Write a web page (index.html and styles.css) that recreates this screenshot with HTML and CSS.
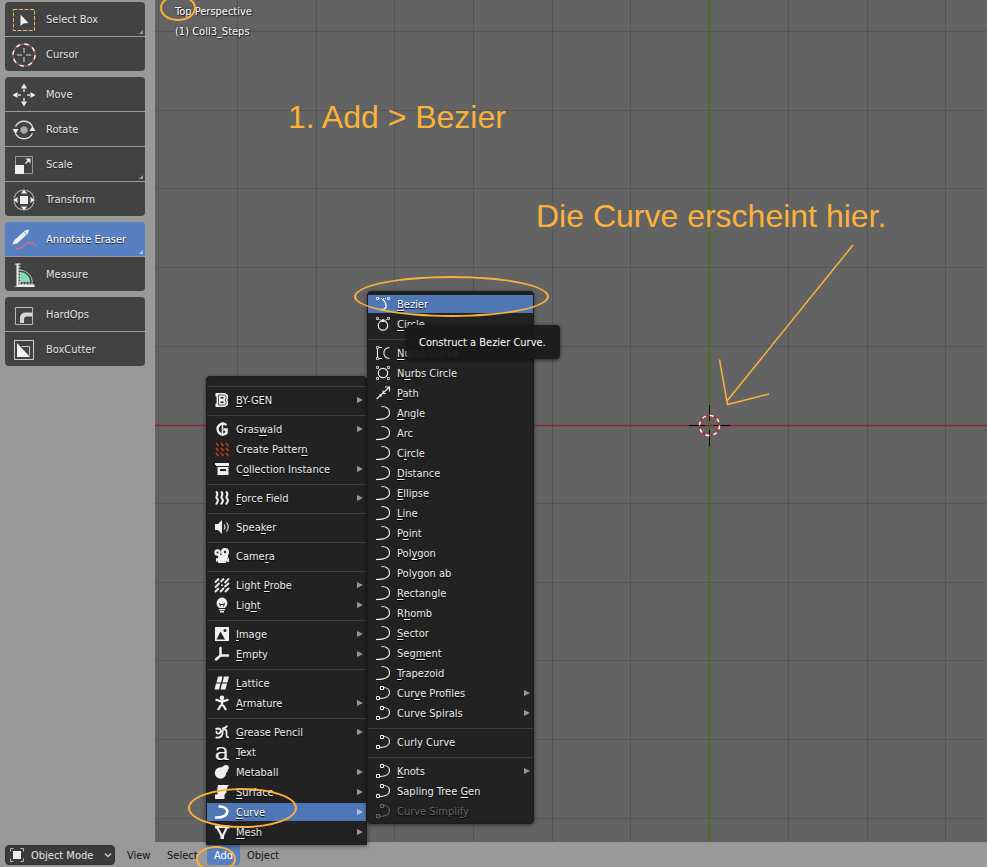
FILE: index.html
```html
<!DOCTYPE html>
<html lang="en">
<head>
<meta charset="utf-8">
<title>3D Viewport</title>
<link rel="stylesheet" href="styles.css">
</head>
<body>
<svg class="defs" aria-hidden="true">
  <defs>
    <symbol id="arc" viewBox="0 0 16 16"><path d="M6.500 1.500C11.500 1.500 14.500 4 14.500 8C14.500 12 10.500 14.500 1 14.500" fill="none" stroke="currentColor" stroke-width="1.200"/></symbol>
    <symbol id="arcpts" viewBox="0 0 16 16"><path d="M8.500 2.500C12 2.500 14.500 4.500 14.500 7.500C14.500 11 11 13.500 5 13.500" fill="none" stroke="currentColor" stroke-width="1.200"/><path d="M5.500 1.500h3v3h-3zM1.500 11.500h3v3h-3z" fill="none" stroke="currentColor"/></symbol>
    <symbol id="more" viewBox="0 0 6 6"><path d="M0 0L6 3L0 6z" fill="currentColor"/></symbol>
    <symbol id="corner" viewBox="0 0 4 4"><path d="M4 0V4H0z" fill="currentColor"/></symbol>
  </defs>
</svg>

<main class="workspace">
  <nav class="toolbar" aria-label="Tools">
    <div class="group">
      <button class="tool" type="button"><svg class="tool-icon" viewBox="0 0 24 24"><rect x="1.500" y="1.500" width="21" height="21" fill="none" stroke="#e3b95c" stroke-dasharray="4 1.500"/><path d="M8.500 6.500V18L11.500 15.500L16.500 15z" fill="#eee"/></svg>Select Box<svg class="corner"><use href="#corner"/></svg></button>
      <button class="tool" type="button"><svg class="tool-icon" viewBox="0 0 24 24"><circle cx="12" cy="12" r="11" fill="none" stroke="#a84e58" stroke-width="1.500"/><circle cx="12" cy="12" r="11" fill="none" stroke="#f2f2f2" stroke-width="1.500" stroke-dasharray="4.320 4.320"/><path d="M12 5v5M12 14v5M5 12h5M14 12h5" stroke="#aaa" stroke-width="1.500"/></svg>Cursor</button>
    </div>
    <div class="group">
      <button class="tool" type="button"><svg class="tool-icon" viewBox="0 0 24 24"><path d="M12 0.500l3 5H9zM12 23.500l3-5H9zM0.500 12l5-3v6zM23.500 12l-5-3v6z" fill="#eee"/><path d="M12 6v3M12 15v3M6 12h3M15 12h3" stroke="#ddd" stroke-width="1.500"/></svg>Move</button>
      <button class="tool" type="button"><svg class="tool-icon" viewBox="0 0 24 24"><path d="M3.500 8.500A9.500 9.500 0 0 1 20.500 8.500M3.500 15.500A9.500 9.500 0 0 0 20.500 15.500" fill="none" stroke="#e6e6e6" stroke-width="1.300"/><path d="M0.500 11h6l-3 5zM17.500 13h6l-3-5z" fill="#eee"/><path d="M10.500 8.500h3l2 2v3l-2 2h-3l-2-2v-3z" fill="#aaa"/></svg>Rotate</button>
      <button class="tool" type="button"><svg class="tool-icon" viewBox="0 0 24 24"><path d="M3.500 12V3.500H20.500V20.500H12" fill="none" stroke="#999"/><path d="M3 12h9v9H3z" fill="#eee"/><path d="M13.500 10.500L17 7" stroke="#eee" stroke-width="1.500"/><path d="M18.500 5.500v5l-5-5z" fill="#eee"/></svg>Scale<svg class="corner"><use href="#corner"/></svg></button>
      <button class="tool" type="button"><svg class="tool-icon" viewBox="0 0 24 24"><circle cx="12" cy="12" r="10" fill="none" stroke="#ccc" stroke-dasharray="11.700 4" stroke-dashoffset="-2"/><path d="M8 8h8v8H8z" fill="#eee"/><path d="M12 1l3 4.500H9zM12 23l3-4.500H9zM1 12l4.500-3v6zM23 12l-4.500-3v6z" fill="#eee"/></svg>Transform</button>
    </div>
    <div class="group">
      <button class="tool active" type="button"><svg class="tool-icon" viewBox="0 0 24 24"><path d="M0.500 16.500L2 12.500L13 2.500L17 1.500L16 5.500L5 15.500z" fill="#f0f0f0"/><path d="M12 3.500l3 3" stroke="#6f92ca"/><path d="M3 20C8 22 11 19 13.500 16.500S20 13 24 18" fill="none" stroke="#dc6b78" stroke-width="1.500"/></svg>Annotate Eraser<svg class="corner"><use href="#corner"/></svg></button>
      <button class="tool" type="button"><svg class="tool-icon" viewBox="0 0 24 24"><path d="M8 9A11 11 0 0 1 18.500 19H8z" fill="#83dcb1"/><path d="M8 7A13 13 0 0 1 20.500 19" fill="none" stroke="#83dcb1"/><path d="M3.500 0.500h5v1h-2v2h2v1h-2v2h2v1h-2v2h2v1h-2v2h2v1h-2v2h2v1h-2v2h2v1h-2v2h1v-2h1v2h2v-2h1v2h2v-2h1v2h2v-2h1v2h2v-2h1v2h2v3h-20v-1h2V1.500h-2z" fill="#eee"/></svg>Measure</button>
    </div>
    <div class="group">
      <button class="tool" type="button"><svg class="tool-icon" viewBox="0 0 24 24"><path d="M3.500 4.500h17v17h-17z" fill="none" stroke="#bbb"/><path d="M8 20V15Q8 9.500 14 9.500H20V13.500H15Q12 13.500 12 16V20z" fill="#d8d8d8"/></svg>HardOps</button>
      <button class="tool" type="button"><svg class="tool-icon" viewBox="0 0 24 24"><path d="M2.500 2.500h19v19h-19z" fill="none" stroke="#ccc"/><path d="M9.500 8.500h8v9" fill="none" stroke="#ccc"/><path d="M5 5V19H18z" fill="#f2f2f2"/></svg>BoxCutter</button>
    </div>
  </nav>

  <section class="viewport" aria-label="3D viewport">
    <svg class="scene" aria-hidden="true">
      <path class="grid" d="M3.500 0V2000M82.500 0V2000M161.500 0V2000M239.500 0V2000M318.500 0V2000M397.500 0V2000M475.500 0V2000M633.500 0V2000M712.500 0V2000M790.500 0V2000M869.500 0V2000M0 31.500H3000M0 110.500H3000M0 188.500H3000M0 267.500H3000M0 346.500H3000M0 503.500H3000M0 582.500H3000M0 660.500H3000M0 739.500H3000M0 818.500H3000"/>
      <path d="M554.500 0V2000" stroke="#48700a" stroke-width="1.500"/>
      <path d="M0 425.500H3000" stroke="#94212f" stroke-width="1.500"/>
      <path d="M554.500 405v16M554.500 430v16M534 425.500h16M559 425.500h16" stroke="#000"/>
      <circle cx="554.500" cy="425.500" r="10" fill="none" stroke="#c8202c" stroke-width="1.500"/>
      <circle cx="554.500" cy="425.500" r="10" fill="none" stroke="#fff" stroke-width="1.500" stroke-dasharray="3.930 3.930"/>
      <path class="ink" d="M698 245L572 401M564.500 359.500L572.500 404.500L614 394"/>
    </svg>
    <div class="info">Top Perspective<br>(1) Coll3_Steps</div>
    <span class="ring ring-top"></span>
    <p class="note note-step">1. Add &gt; Bezier</p>
    <p class="note note-here">Die Curve erscheint hier.</p>
  </section>
</main>

<footer class="header">
  <label class="mode">
    <svg class="mode-icon" viewBox="0 0 14 14"><path d="M3 3h8v8H3z" fill="#eee"/><path d="M.5 3.500v-3h3M10.500.5h3v3M13.500 10.500v3h-3M3.500 13.500h-3v-3" fill="none" stroke="#bbb"/></svg>
    <select aria-label="Mode"><option>Object Mode</option></select>
    <svg class="chevron" viewBox="0 0 8 5"><path d="M1 .5L4 3.500L7 .5" fill="none" stroke="#ccc" stroke-width="1.300"/></svg>
  </label>
  <button class="menu-button" type="button">View</button>
  <button class="menu-button" type="button">Select</button>
  <div class="anchor">
    <button class="menu-button open" type="button" aria-haspopup="true" aria-expanded="true">Add</button>
    <span class="ring ring-add"></span>
    <ul class="menu main-menu">
      <li class="sep"></li>
      <li><button type="button"><svg class="icon" viewBox="0 0 16 16"><path d="M1.500 1h9.500l3 2v4l-1 1l1 1v4l-3 2H1.500v-3.500h1v-7h-1z" fill="#eee"/><path d="M4.500 3h6l1.500 1v3l-1 1l1 1v3l-1.500 1h-6z" fill="none" stroke="#333" stroke-width=".8"/><path d="M6.500 5h3v1.500h-3zM6.500 9.500h3V11h-3z" fill="#222"/></svg><span><u>B</u>Y-GEN</span><svg class="more"><use href="#more"/></svg></button></li>
      <li class="sep"></li>
      <li><button type="button"><svg class="icon" viewBox="0 0 16 16"><path d="M12.500 4.200A5.300 5.300 0 1 0 12.500 12V8.500H9.500" fill="none" stroke="#eee" stroke-width="2.500"/><path d="M8.500 1v14" stroke="#eee" stroke-width="1.500"/></svg><span>Gras<u>w</u>ald</span><svg class="more"><use href="#more"/></svg></button></li>
      <li><button type="button"><svg class="icon" viewBox="0 0 16 16"><path d="M2 2l2.500 3M7 2l2.500 3M12 2l2.500 3M2 7l2.500 3M7 7l2.500 3M12 7l2.500 3M2 12l2.500 3M7 12l2.500 3M12 12l2.500 3" stroke="#d23c18" stroke-width="1.600"/></svg><span>Create Patter<u>n</u></span></button></li>
      <li><button type="button"><svg class="icon" viewBox="0 0 16 16"><path d="M1 2h2v3H2V4H1zM3 2h12v3H3zM3.500 6h11v8h-11z" fill="#eee"/><path d="M6 8h6v2H6z" fill="#222"/></svg><span>C<u>o</u>llection Instance</span><svg class="more"><use href="#more"/></svg></button></li>
      <li class="sep"></li>
      <li><button type="button"><svg class="icon" viewBox="0 0 16 16"><path d="M2 1.500C6 5 0.500 6 3 8.500S3 12 2 14.500M7 1.500C11 5 5.500 6 8 8.500S8 12 7 14.500M12 1.500C16 5 10.500 6 13 8.500S13 12 12 14.500" fill="none" stroke="#eee" stroke-width="2"/></svg><span><u>F</u>orce Field</span><svg class="more"><use href="#more"/></svg></button></li>
      <li class="sep"></li>
      <li><button type="button"><svg class="icon" viewBox="0 0 16 16"><path d="M1 5h3l4-4v14l-4-4H1z" fill="#eee"/><path d="M10 5.500q2 2.500 0 5M12.500 3.500q3.500 4.500 0 9" fill="none" stroke="#ddd" stroke-width="1.200"/></svg><span>Spea<u>k</u>er</span></button></li>
      <li class="sep"></li>
      <li><button type="button"><svg class="icon" viewBox="0 0 16 16"><circle cx="3.500" cy="4.500" r="3.200" fill="#eee"/><circle cx="11" cy="4" r="4" fill="#eee"/><circle cx="3.500" cy="4.500" r="1" fill="#222"/><circle cx="11" cy="4" r="1.200" fill="#222"/><path d="M4 7h10v3h-1v1l2-1.500v5l-3-1.500V15H4v-2l-2 1V10l2 .5z" fill="#eee"/></svg><span>Came<u>r</u>a</span></button></li>
      <li class="sep"></li>
      <li><button type="button"><svg class="icon" viewBox="0 0 16 16"><path d="M1 5.500L5 1.500M1 10.500L5.500 6M6.500 5L10 1.500M1 15L5 11M10.500 6L15 1.500M6 15L10 11M10.500 10L15 6M11 15L15 11" stroke="#eee" stroke-width="1.800"/><circle cx="8" cy="8.300" r="1" fill="#eee"/></svg><span>Light <u>P</u>robe</span><svg class="more"><use href="#more"/></svg></button></li>
      <li><button type="button"><svg class="icon" viewBox="0 0 16 16"><path d="M8 .5A5.800 5.800 0 0 1 12 10L10.500 11h-5L4 10A5.800 5.800 0 0 1 8 .5zM5 12h6v1.200H5zM6 14h4v1.500H6z" fill="#eee"/><path d="M5.500 6l1 3.500M10.500 6l-1 3.500M6 7.500h4" stroke="#222" fill="none"/></svg><span>Lig<u>h</u>t</span><svg class="more"><use href="#more"/></svg></button></li>
      <li class="sep"></li>
      <li><button type="button"><svg class="icon" viewBox="0 0 16 16"><path d="M1 1h14v14H1z" fill="#eee"/><path d="M2.500 13.500L6.500 5.500L11 13.500z" fill="#222"/><circle cx="11" cy="4.500" r="1.500" fill="#222"/></svg><span><u>I</u>mage</span><svg class="more"><use href="#more"/></svg></button></li>
      <li><button type="button"><svg class="icon" viewBox="0 0 16 16"><path d="M6.500 2V9.500H14M6.500 9.500L2 13.500" fill="none" stroke="#eee" stroke-width="2.500" stroke-linecap="round"/></svg><span><u>E</u>mpty</span><svg class="more"><use href="#more"/></svg></button></li>
      <li class="sep"></li>
      <li><button type="button"><svg class="icon" viewBox="0 0 16 16"><path d="M4 1.500h4.500L7 7.500H2.500zM10 1.500h5L13.500 7.500H8.500zM2 8.500h4.500L5 14.500H.5zM8 8.500h5L11.500 14.500H6.500z" fill="#eee"/></svg><span><u>L</u>attice</span></button></li>
      <li><button type="button"><svg class="icon" viewBox="0 0 16 16"><circle cx="8" cy="2.800" r="2.300" fill="#eee"/><path d="M1.500 4.500L6 6h4l4.500-1.500M8 6v5M7 10L4 15M9 10l3 5" fill="none" stroke="#eee" stroke-width="2.300"/></svg><span><u>A</u>rmature</span><svg class="more"><use href="#more"/></svg></button></li>
      <li class="sep"></li>
      <li><button type="button"><svg class="icon" viewBox="0 0 16 16"><path d="M1.500 5.500Q4 3.500 6.500 5.500Q7.500 8.500 5 9.500Q2 10 2.500 7M1.500 13.500Q7.500 14.500 8.500 9.500V7Q10 4.500 12 6Q13 8 12.500 11Q12.500 14 15 13M8 4.500Q12.500 4 13 1.500" fill="none" stroke="#eee" stroke-width="1.700"/></svg><span><u>G</u>rease Pencil</span><svg class="more"><use href="#more"/></svg></button></li>
      <li><button type="button"><span class="icon letter" aria-hidden="true">a</span><span><u>T</u>ext</span></button></li>
      <li><button type="button"><svg class="icon" viewBox="0 0 16 16"><circle cx="6.500" cy="9" r="5.700" fill="#eee"/><circle cx="12" cy="3.800" r="2.800" fill="#eee"/><path d="M7 4l2-2l5 5l-2 2z" fill="#eee"/></svg><span>Metaball</span><svg class="more"><use href="#more"/></svg></button></li>
      <li><button type="button"><svg class="icon" viewBox="0 0 16 16"><path d="M4 1h11q-3 3-2.500 7.500l-2 2V15H1v-4.500h2.500Q2.500 5 4 1z" fill="#eee"/></svg><span><u>S</u>urface</span><svg class="more"><use href="#more"/></svg></button></li>
      <li class="current">
        <button type="button" aria-haspopup="true" aria-expanded="true"><svg class="icon" viewBox="0 0 16 16"><path d="M5.500 2.500C16 2.500 17 13.500 2 13.500" fill="none" stroke="#fff" stroke-width="2.600" stroke-linecap="round"/></svg><span><u>C</u>urve</span><svg class="more"><use href="#more"/></svg></button>
        <span class="ring ring-curve"></span>
        <ul class="menu sub-menu">
          <li class="current">
            <button type="button" aria-describedby="tip"><svg class="icon" viewBox="0 0 16 16"><path d="M7.500 3C11 6 13 11.500 8.500 13.500H5" fill="none" stroke="currentColor" stroke-width="1.300"/><path d="M4 2.500h8" stroke="currentColor" stroke-dasharray="1 1"/><path d="M1.500 1.500h2v2h-2zM12.500 1.500h2v2h-2z" fill="none" stroke="currentColor" stroke-width=".8"/></svg><span><u>B</u>ezier</span></button>
            <span class="ring ring-bezier"></span>
            <div class="tooltip" id="tip" role="tooltip">Construct a Bezier Curve.</div>
          </li>
          <li><button type="button"><svg class="icon" viewBox="0 0 16 16"><circle cx="8" cy="9.500" r="4.700" fill="none" stroke="currentColor" stroke-width="1.200"/><path d="M1.500 1.500h2v2h-2zM12.500 1.500h2v2h-2z" fill="none" stroke="currentColor" stroke-width=".8"/><path d="M4 3.500l4 1.500l4-1.500" fill="none" stroke="currentColor" stroke-width=".7"/><circle cx="8" cy="4.500" r="1.500" fill="currentColor"/></svg><span><u>C</u>ircle</span></button></li>
          <li class="sep"></li>
          <li><button type="button"><svg class="icon" viewBox="0 0 16 16"><path d="M4 2.500h3M2.500 4v8M4 13.500h3M14.500 2.500C7 3 7 13 14.500 13.500" fill="none" stroke="currentColor" stroke-width="1.100"/><path d="M1.500 1.500h2v2h-2zM1.500 12.500h2v2h-2z" fill="none" stroke="currentColor" stroke-width=".8"/></svg><span><u>N</u>urbs Curve</span></button></li>
          <li><button type="button"><svg class="icon" viewBox="0 0 16 16"><circle cx="8" cy="8" r="4.700" fill="none" stroke="currentColor" stroke-width="1.200"/><path d="M1.500 1.500h2v2h-2zM12.500 1.500h2v2h-2zM1.500 12.500h2v2h-2zM12.500 12.500h2v2h-2z" fill="none" stroke="currentColor" stroke-width=".8"/></svg><span>N<u>u</u>rbs Circle</span></button></li>
          <li><button type="button"><svg class="icon" viewBox="0 0 16 16"><path d="M1.500 14L14 2.500M10 2h4.500v4.500M4.500 9.500l2 2M8 5.500v3h3" fill="none" stroke="currentColor" stroke-width="1.100"/></svg><span><u>P</u>ath</span></button></li>
          <li><button type="button"><svg class="icon"><use href="#arc"/></svg><span><u>A</u>ngle</span></button></li>
          <li><button type="button"><svg class="icon"><use href="#arc"/></svg><span>Arc</span></button></li>
          <li><button type="button"><svg class="icon"><use href="#arc"/></svg><span>C<u>i</u>rcle</span></button></li>
          <li><button type="button"><svg class="icon"><use href="#arc"/></svg><span><u>D</u>istance</span></button></li>
          <li><button type="button"><svg class="icon"><use href="#arc"/></svg><span><u>E</u>llipse</span></button></li>
          <li><button type="button"><svg class="icon"><use href="#arc"/></svg><span><u>L</u>ine</span></button></li>
          <li><button type="button"><svg class="icon"><use href="#arc"/></svg><span>P<u>o</u>int</span></button></li>
          <li><button type="button"><svg class="icon"><use href="#arc"/></svg><span>Pol<u>y</u>gon</span></button></li>
          <li><button type="button"><svg class="icon"><use href="#arc"/></svg><span>Polygon ab</span></button></li>
          <li><button type="button"><svg class="icon"><use href="#arc"/></svg><span><u>R</u>ectangle</span></button></li>
          <li><button type="button"><svg class="icon"><use href="#arc"/></svg><span>R<u>h</u>omb</span></button></li>
          <li><button type="button"><svg class="icon"><use href="#arc"/></svg><span><u>S</u>ector</span></button></li>
          <li><button type="button"><svg class="icon"><use href="#arc"/></svg><span>Seg<u>m</u>ent</span></button></li>
          <li><button type="button"><svg class="icon"><use href="#arc"/></svg><span><u>T</u>rapezoid</span></button></li>
          <li><button type="button"><svg class="icon"><use href="#arcpts"/></svg><span>Cur<u>v</u>e Profiles</span><svg class="more"><use href="#more"/></svg></button></li>
          <li><button type="button"><svg class="icon"><use href="#arcpts"/></svg><span>Curve Spirals</span><svg class="more"><use href="#more"/></svg></button></li>
          <li class="sep"></li>
          <li><button type="button"><svg class="icon"><use href="#arcpts"/></svg><span>Curly Curve</span></button></li>
          <li class="sep"></li>
          <li><button type="button"><svg class="icon"><use href="#arcpts"/></svg><span><u>K</u>nots</span><svg class="more"><use href="#more"/></svg></button></li>
          <li><button type="button"><svg class="icon"><use href="#arcpts"/></svg><span>Sapling Tree <u>G</u>en</span></button></li>
          <li><button type="button" disabled><svg class="icon"><use href="#arcpts"/></svg><span>Curve Simpli<u>f</u>y</span></button></li>
        </ul>
      </li>
      <li><button type="button"><svg class="icon" viewBox="0 0 16 16"><path d="M3 3h10L8.300 13z" fill="none" stroke="#eee" stroke-width="2.200" stroke-linejoin="round"/><path d="M1 1.500h4v3H1zM11.500 1.500h4v3h-4zM6.500 11.500h3.500V15H6.500z" fill="#eee"/></svg><span><u>M</u>esh</span><svg class="more"><use href="#more"/></svg></button></li>
    </ul>
  </div>
  <button class="menu-button" type="button">Object</button>
</footer>
</body>
</html>
```
FILE: styles.css
```css
* {
  box-sizing: border-box;
}

body {
  margin: 0;
  height: 100vh;
  display: flex;
  flex-direction: column;
  overflow: hidden;
  background: #999;
  font: 11px/20px "DejaVu Sans Condensed", "DejaVu Sans", sans-serif;
  color: #eee;
}

button,
select {
  margin: 0;
  padding: 0;
  border: 0;
  background: none;
  font: inherit;
  color: inherit;
  text-align: left;
}

.defs {
  position: absolute;
  width: 0;
  height: 0;
}

.workspace {
  flex: 1;
  min-height: 0;
  display: flex;
}

/* Tool shelf */

.toolbar {
  flex: none;
  width: 155px;
  padding: 2px 10px 0 5px;
  display: flex;
  flex-direction: column;
  gap: 6px;
}

.group {
  display: flex;
  flex-direction: column;
  gap: 1px;
  border-radius: 4px;
  overflow: hidden;
}

.tool {
  position: relative;
  height: 34px;
  padding: 2px 0 0 7px;
  display: flex;
  align-items: center;
  gap: 10px;
  background: #424242;
  color: #e6e6e6;
  text-shadow: 0 1px 1px #222;
}

.tool.active {
  background: #5680c2;
  color: #fff;
}

.tool-icon {
  width: 24px;
  height: 24px;
}

.corner {
  position: absolute;
  right: 2px;
  bottom: 2px;
  width: 4px;
  height: 4px;
  color: #999;
}

.active .corner {
  color: #a4c4f5;
}

/* Viewport */

.viewport {
  position: relative;
  flex: 1;
  overflow: hidden;
  background: #636363;
}

.scene {
  position: absolute;
  inset: 0;
  width: 100%;
  height: 100%;
}

.grid {
  stroke: #545454;
}

.ink {
  fill: none;
  stroke: #fbb23a;
  stroke-width: 1.5;
}

.info {
  position: relative;
  padding: 2px 20px;
  color: #fff;
  text-shadow: 1px 1px 1px #222, 0 0 2px #333;
}

.note {
  position: absolute;
  margin: 0;
  font: 32px/36px "Liberation Sans", sans-serif;
  color: #fbb23a;
  white-space: nowrap;
}

.note-step {
  left: 133px;
  top: 99px;
}

.note-here {
  left: 381px;
  top: 198px;
}

.ring {
  position: absolute;
  z-index: 5;
  border: 2px solid #f9b03c;
  border-radius: 50%;
  pointer-events: none;
}

.ring-top {
  left: 5px;
  top: -5px;
  width: 36px;
  height: 26px;
}

.ring-add {
  left: -11px;
  top: 1px;
  width: 40px;
  height: 26px;
}

.ring-curve {
  left: -19px;
  top: -14px;
  width: 109px;
  height: 40px;
}

.ring-bezier {
  left: -14px;
  top: -18px;
  width: 195px;
  height: 41px;
}

/* Bottom header */

.header {
  flex: none;
  position: relative;
  display: grid;
  grid-template-columns: 115px 40px 47px 33px auto;
  padding: 3px 5px 2px;
  background: #999;
  color: #111;
}

.mode {
  position: relative;
  margin-right: 5px;
}

.mode select {
  display: block;
  width: 100%;
  height: 20px;
  padding: 1px 0 0 25px;
  appearance: none;
  background: #3b3b3b;
  border: 1px solid #303030;
  border-radius: 4px;
  line-height: 18px;
  color: #e6e6e6;
}

.mode-icon,
.chevron {
  position: absolute;
  pointer-events: none;
}

.mode-icon {
  left: 5px;
  top: 3px;
  width: 14px;
  height: 14px;
}

.chevron {
  right: 3px;
  top: 8px;
  width: 8px;
  height: 5px;
}

.menu-button {
  display: block;
  width: 100%;
  height: 20px;
  padding: 1px 6px 0 7px;
}

.menu-button.open {
  background: #5680c2;
  border-radius: 0 0 4px 4px;
  color: #fff;
}

.anchor {
  position: relative;
}

/* Pop-up menus */

.menu {
  position: absolute;
  margin: 0;
  padding: 2px 0;
  list-style: none;
  background: #222;
  border: 1px solid #1d1d1d;
  border-radius: 4px;
  box-shadow: 0 1px 4px rgba(0, 0, 0, 0.5);
  color: #eee;
}

.main-menu {
  left: -1px;
  bottom: 100%;
  width: 161px;
  padding-top: 4px;
  border-radius: 4px 4px 0 0;
}

.sub-menu {
  left: calc(100% + 1px);
  bottom: -2px;
  width: 167px;
}

.menu li {
  position: relative;
}

.menu .sep {
  height: 9px;
  padding-top: 5px;
}

.menu .sep::before {
  content: "";
  display: block;
  height: 1px;
  background: #3e3e3e;
}

.menu button {
  width: 100%;
  height: 20px;
  padding: 0 3px 0 7px;
  display: flex;
  align-items: center;
  gap: 6px;
  border: solid transparent;
  border-width: 1px 0;
  background-clip: padding-box;
  line-height: 18px;
  text-shadow: 0 1px 1px #000;
}

.menu button span {
  padding-top: 2px;
}

.menu .current > button {
  background-color: #5077b5;
  color: #fff;
}

.menu button:disabled {
  color: #666;
}

.menu u {
  text-underline-offset: 2px;
  text-decoration-thickness: 1px;
  text-decoration-skip-ink: none;
}

.icon {
  flex: none;
  width: 16px;
  height: 16px;
}

.letter {
  font: 25px/11px "DejaVu Serif", serif;
  text-align: center;
}

.more {
  width: 6px;
  height: 6px;
  margin-left: auto;
  color: #999;
}

.current > button > .more {
  color: #a9c4f0;
}

.tooltip {
  position: absolute;
  left: 39px;
  top: 31px;
  z-index: 4;
  padding: 8px 14px 6px 12px;
  background: rgba(25, 25, 25, 0.95);
  border-radius: 4px;
  box-shadow: 0 1px 4px rgba(0, 0, 0, 0.6);
  color: #fff;
  white-space: nowrap;
}
```
